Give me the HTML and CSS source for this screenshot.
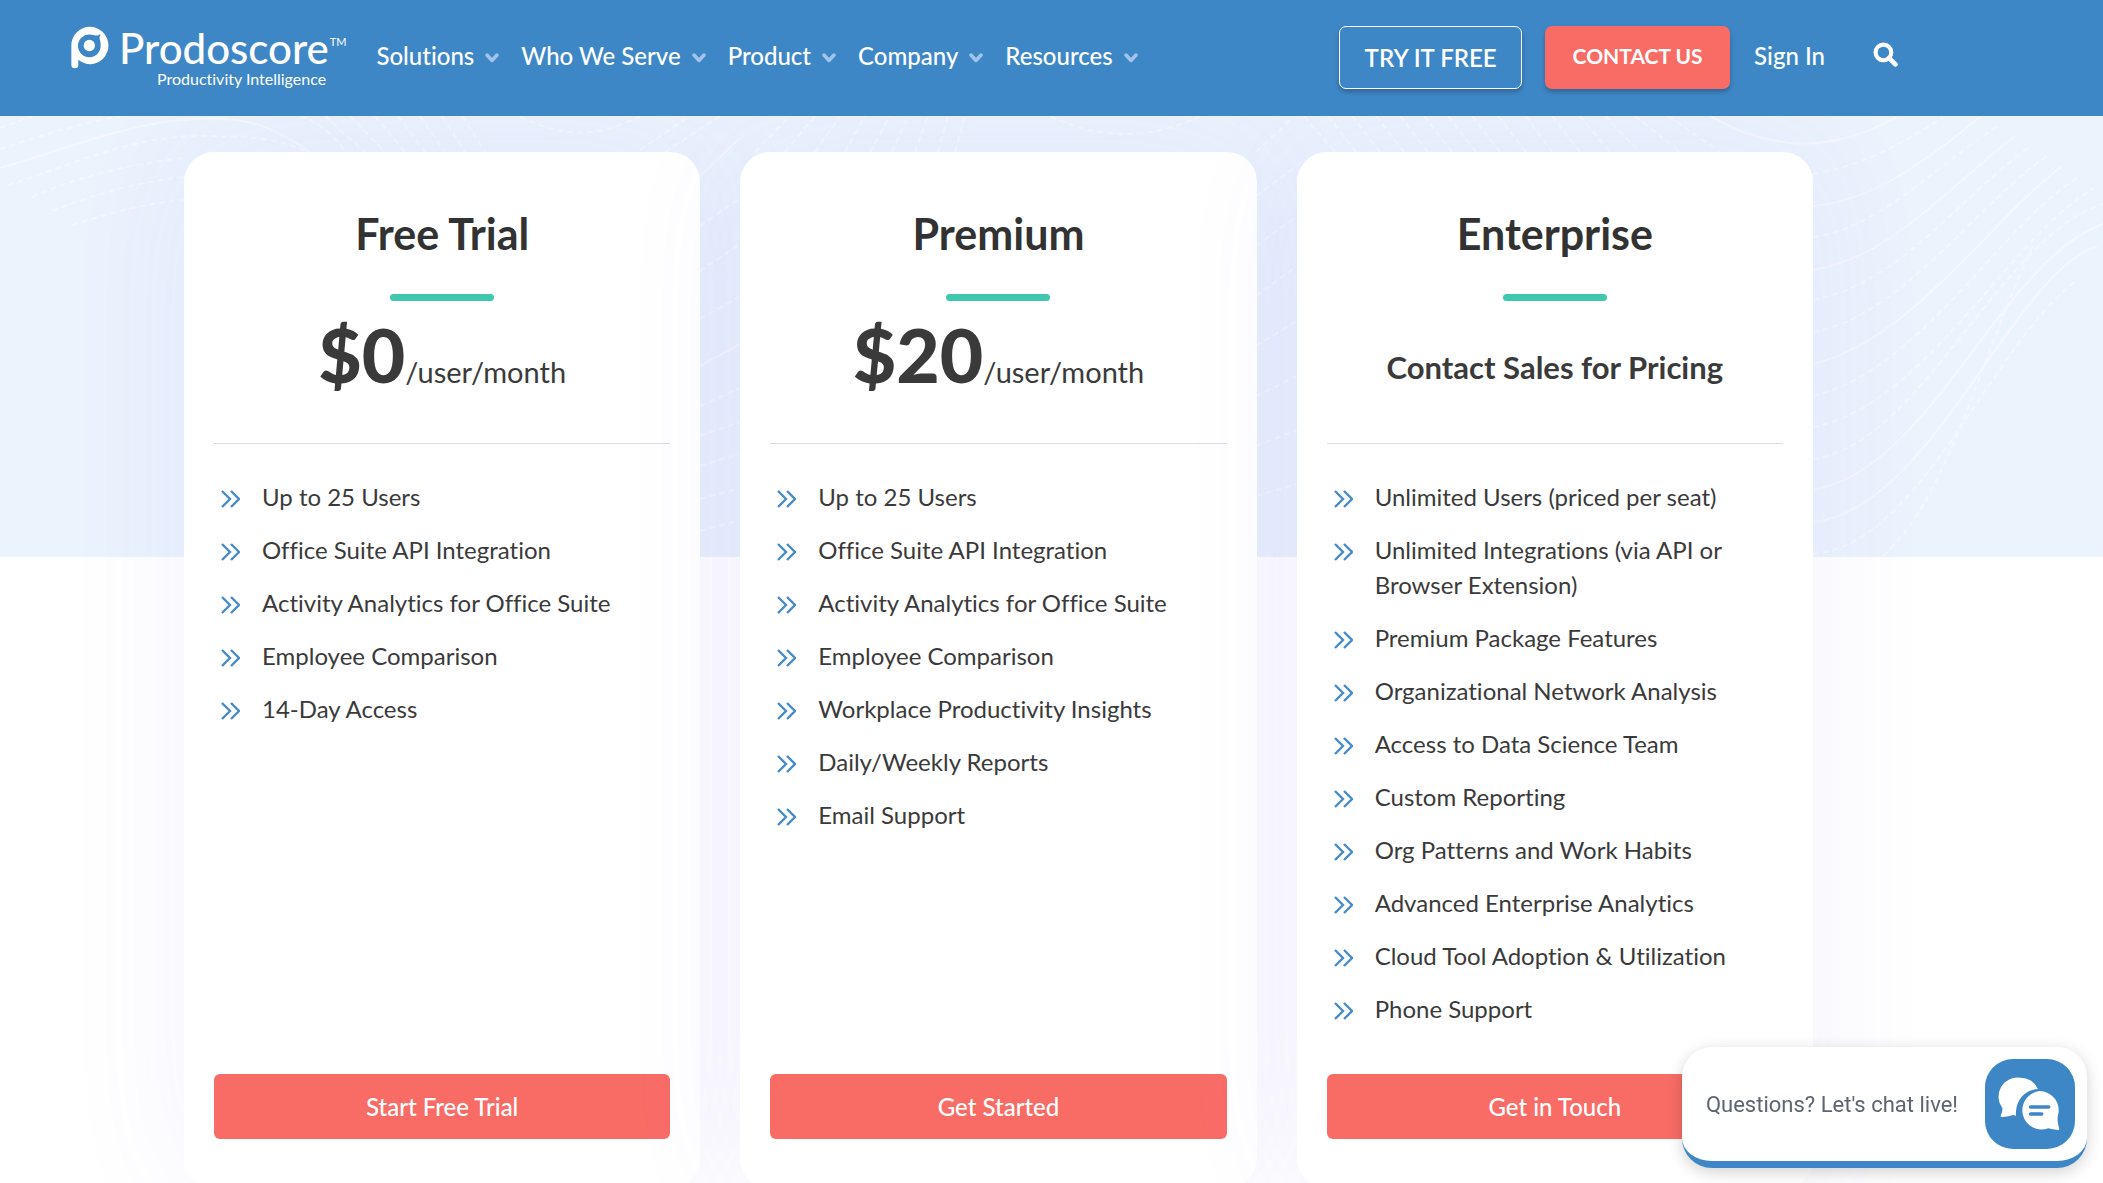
FILE: index.html
```html
<!DOCTYPE html>
<html lang="en">
<head>
<meta charset="utf-8">
<meta name="viewport" content="width=device-width, initial-scale=1">
<title>Pricing - Prodoscore</title>
<link rel="stylesheet" href="styles.css">
</head>
<body>
<svg class="defs" width="0" height="0" aria-hidden="true">
  <symbol id="down" viewBox="0 0 14 10"><path d="M2 2l5 5.500 5-5.500" fill="none" stroke="currentColor" stroke-width="3.500" stroke-linecap="round" stroke-linejoin="round"/></symbol>
</svg>

<header class="header">
  <a class="logo" href="#" aria-label="Prodoscore home">
    <svg class="logo-mark" viewBox="0 0 114 128" aria-hidden="true">
      <path fill="#fff" d="M57 2a55 56 0 1 1-35 99v15a10.500 10.500 0 0 1-21 0V58A56 56 0 0 1 57 2z"/>
      <path fill="#3e87c7" d="M55 25c10 0 14 3 19 3 6 0 10-2 15-4-3 6-4 10-3 15 2 5 3 10 3 19a34 34 0 1 1-34-33z"/>
      <circle cx="55" cy="58" r="17" fill="#fff"/>
    </svg>
    <span class="logo-words">
      <span class="logo-name">Prodoscore<sup class="logo-tm">TM</sup></span>
      <span class="logo-tag">Productivity Intelligence</span>
    </span>
  </a>
  <nav class="nav" aria-label="Main">
    <a href="#">Solutions<svg class="down"><use href="#down"/></svg></a>
    <a href="#">Who We Serve<svg class="down"><use href="#down"/></svg></a>
    <a href="#">Product<svg class="down"><use href="#down"/></svg></a>
    <a href="#">Company<svg class="down"><use href="#down"/></svg></a>
    <a href="#">Resources<svg class="down"><use href="#down"/></svg></a>
  </nav>
  <div class="actions">
    <a class="btn btn-outline" href="#">TRY IT FREE</a>
    <a class="btn btn-contact" href="#">CONTACT US</a>
    <a class="sign-in" href="#">Sign In</a>
    <button class="search" type="button" aria-label="Search">
      <svg viewBox="0 0 24 24" aria-hidden="true"><circle cx="10" cy="10" r="7.500" fill="none" stroke="#fff" stroke-width="4"/><path d="M15.500 15.500l6 6" stroke="#fff" stroke-width="4.500" stroke-linecap="round"/></svg>
    </button>
  </div>
</header>

<main class="pricing">
  <div class="backdrop" aria-hidden="true">
    <svg class="waves" viewBox="0 0 2103 441" preserveAspectRatio="xMidYMin slice">
      <g class="wave-solid">
        <path d="M1710 0C1770 35 1830 38 1897 1"/>
        <path d="M1813 90C1870 85 1920 50 1980 1"/>
        <path d="M1813 154C1890 142 1950 70 2015 20"/>
        <path d="M1813 248C1910 225 1990 105 2061 51"/>
        <path d="M1813 374C1930 355 2000 145 2103 108"/>
        <path d="M1813 406C1930 395 2010 160 2097 130"/>
        <path d="M0 52C60 35 120 10 180 4S270 8 310 36"/>
        <path d="M700 60L740 22M700 250L740 228"/>
      </g>
      <g class="wave-dash">
        <path d="M1813 58C1860 50 1900 30 1943 1"/>
        <path d="M1813 121C1880 112 1935 50 1998 10"/>
        <path d="M1813 184C1900 168 1960 80 2031 30"/>
        <path d="M1813 216C1900 202 1980 85 2047 40"/>
        <path d="M1813 280C1920 255 2000 110 2077 62"/>
        <path d="M1813 311C1925 290 2010 120 2094 72"/>
        <path d="M1813 343C1920 330 2000 120 2103 88"/>
        <path d="M1813 438C1920 430 1990 230 2075 166"/>
        <path d="M1883 440C1950 380 1980 240 2034 128"/>
        <path d="M0 12L32 0M0 33C40 20 80 8 120 0M8 69C70 50 130 20 200 20S280 26 310 36"/>
        <path d="M32 81C80 60 130 48 184 42M52 95C100 76 140 66 184 61M72 109C110 97 150 86 184 84"/>
        <path d="M520 0C560 22 600 22 640 0M300 0C320 6 335 20 345 36M325 0L365 36M350 0L385 36M375 0L405 36M398 0L425 36M420 0L445 36M442 0L465 36M462 0L485 36"/>
        <path d="M640 34L690 0M665 36L720 0M700 110L740 82M700 155L740 128M700 203L740 180M700 290L740 272M700 320L740 306M700 350L740 338M700 383L740 372M700 415L740 404"/>
        <path d="M755 36L790 0M785 36L815 0M815 36L840 0M845 36L865 0M870 36L890 0M892 36L908 0M915 36L928 0M938 36L948 0M955 36L965 0"/>
        <path d="M1050 0C1100 24 1150 24 1200 0M1256 36L1290 4M1256 80L1297 50M1256 130L1297 100M1256 180L1297 150M1256 230L1297 205M1256 280L1297 260M1256 330L1297 314M1256 380L1297 368"/>
        <path d="M1304 0L1335 36M1328 0L1356 36M1352 0L1380 36M1376 0L1404 36M1400 0L1428 36M1424 0L1452 36M1448 0L1476 36M1472 0L1500 36M1498 0L1526 36M1526 0L1552 36M1552 0L1580 36M1580 0L1610 36M1605 0L1640 36M1635 0L1680 36M1668 0L1720 36"/>
      </g>
    </svg>
  </div>

  <div class="plans">
    <section class="plan">
      <h2>Free Trial</h2>
      <p class="price"><strong>$0</strong>/user/month</p>
      <ul class="features">
        <li>Up to 25 Users</li>
        <li>Office Suite API Integration</li>
        <li>Activity Analytics for Office Suite</li>
        <li>Employee Comparison</li>
        <li>14-Day Access</li>
      </ul>
      <a class="cta" href="#">Start Free Trial</a>
    </section>
    <section class="plan">
      <h2>Premium</h2>
      <p class="price"><strong>$20</strong>/user/month</p>
      <ul class="features">
        <li>Up to 25 Users</li>
        <li>Office Suite API Integration</li>
        <li>Activity Analytics for Office Suite</li>
        <li>Employee Comparison</li>
        <li>Workplace Productivity Insights</li>
        <li>Daily/Weekly Reports</li>
        <li>Email Support</li>
      </ul>
      <a class="cta" href="#">Get Started</a>
    </section>
    <section class="plan">
      <h2>Enterprise</h2>
      <p class="price price-quote">Contact Sales for Pricing</p>
      <ul class="features">
        <li>Unlimited Users (priced per seat)</li>
        <li>Unlimited Integrations (via API or Browser Extension)</li>
        <li>Premium Package Features</li>
        <li>Organizational Network Analysis</li>
        <li>Access to Data Science Team</li>
        <li>Custom Reporting</li>
        <li>Org Patterns and Work Habits</li>
        <li>Advanced Enterprise Analytics</li>
        <li>Cloud Tool Adoption &amp; Utilization</li>
        <li>Phone Support</li>
      </ul>
      <a class="cta" href="#">Get in Touch</a>
    </section>
  </div>
</main>

<button class="chat" type="button">
  <span>Questions? Let's chat live!</span>
  <svg class="chat-icon" viewBox="0 0 270 270" aria-hidden="true">
    <path fill="#fff" d="M105 56a57 57 0 0 1 54 34c-40 2-68 34-66 80l-8-2c-12 4-24 6-34 6-4 0-5-3-3-7 3-6 5-13 4-20A57 57 0 0 1 105 56z"/>
    <path fill="#fff" d="M163 96a58 58 0 0 1 55 77c-1 12 1 22 4 33 2 5 0 8-5 7-10-1-18-3-27-5A58 58 0 1 1 163 96z"/>
    <path d="M137 144h54M137 165h33" stroke="#3e87c7" stroke-width="11" stroke-linecap="round"/>
  </svg>
</button>
</body>
</html>
```
FILE: styles.css
```css
* { box-sizing: border-box; }

html { overflow: hidden auto; scrollbar-width: none; }

body {
  margin: 0;
  background: #fff;
  color: #3a3a3a;
  font-family: Lato, "Open Sans", sans-serif;
  font-variant-ligatures: none;
  font-size: 24px;
}

a { color: inherit; text-decoration: none; }

.defs { position: absolute; }

/* Header */
.header {
  position: relative;
  z-index: 1;
  display: flex;
  align-items: flex-start;
  height: 116px;
  padding: 26px 205px 0 71px;
  background: #3e87c7;
  color: #fff;
}

.logo { display: flex; gap: 10px; }
.logo-mark { width: 38px; height: 43px; }
.logo-words { display: flex; flex-direction: column; }
.logo-name { display: flex; font-size: 42px; font-weight: 500; line-height: 44px; }
.logo-tm { font-size: 11px; line-height: 32px; font-weight: 400; margin-left: 1px; }
.logo-tag { padding-left: 38px; font-size: 16px; line-height: 18px; }

.nav {
  display: flex;
  gap: 22px;
  margin-left: 30px;
  line-height: 60px;
  font-weight: 500;
}
.nav a { display: flex; align-items: center; gap: 11px; white-space: nowrap; }
.down { width: 14px; height: 10px; margin-top: 4px; color: #a3c4ea; }

.actions { display: flex; margin-left: auto; white-space: nowrap; }
.btn {
  height: 63px;
  border-radius: 7px;
  text-align: center;
  box-shadow: 0 3px 5px rgba(0, 0, 0, .25);
}
.btn-outline { width: 183px; border: 1px solid #fff; font-weight: 600; line-height: 62px; }
.btn-contact {
  width: 185px;
  margin-left: 23px;
  background: #f96c66;
  font-size: 21px;
  font-weight: 700;
  line-height: 60px;
}
.sign-in { margin-left: 24px; line-height: 60px; font-weight: 500; }
.search { align-self: flex-start; margin: 16px 0 0 48px; padding: 0; border: 0; background: none; }
.search svg { display: block; width: 25px; height: 25px; }

/* Pricing */
.pricing { position: relative; padding: 36px 290px 0 184px; }
.backdrop {
  position: absolute;
  inset: 0 0 auto;
  height: 441px;
  background: #ebf3fd;
  overflow: hidden;
}
.waves { width: 100%; height: 100%; fill: none; stroke: #f5f7fe; stroke-width: 2; }
.wave-dash { stroke-dasharray: 6 4; }

.plans {
  position: relative;
  display: grid;
  grid-template-columns: repeat(3, 1fr);
  gap: 40px;
}
.plan {
  display: flex;
  flex-direction: column;
  padding: 58px 30px 49px;
  border-radius: 30px;
  background: #fff;
  box-shadow: 0 0 130px rgba(105, 75, 230, .07);
}
.plan h2 {
  margin: 0;
  color: #323232;
  font-size: 43px;
  font-weight: 700;
  line-height: 48px;
  text-align: center;
}
.plan h2::after {
  content: "";
  display: block;
  width: 104px;
  height: 7px;
  margin: 36px auto 0;
  border-radius: 4px;
  background: #3fc8ad;
}
.price {
  display: flex;
  align-items: baseline;
  justify-content: center;
  height: 143px;
  margin: 0;
  border-bottom: 1px solid #dcdce4;
  font-size: 29px;
  line-height: 106px;
}
.price strong { font-size: 75px; font-weight: 900; }
.price-quote { font-size: 31px; font-weight: 700; line-height: 132px; }

.features {
  display: grid;
  gap: 18px;
  margin: 35px 0 48px;
  padding: 0 16px 0 7px;
  list-style: none;
  line-height: 35px;
}
.features li { display: flex; gap: 22px; }
.features li::before {
  content: "";
  flex: none;
  width: 19px;
  height: 18px;
  margin-top: 11px;
  background: url("data:image/svg+xml,%3Csvg xmlns='http://www.w3.org/2000/svg' viewBox='0 0 19 18'%3E%3Cpath d='M1 1l8 8-8 8M10 1l8 8-8 8' fill='none' stroke='%23468bc8' stroke-width='2.4'/%3E%3C/svg%3E") no-repeat;
}

.cta {
  margin-top: auto;
  border-radius: 6px;
  background: #f96c66;
  color: #fff;
  font-weight: 500;
  line-height: 65px;
  text-align: center;
}

/* Chat launcher */
.chat {
  position: fixed;
  right: 16px;
  bottom: 15px;
  display: flex;
  align-items: center;
  gap: 27px;
  padding: 12px 12px 12px 24px;
  border: 0;
  border-bottom: 7px solid #3e87c7;
  border-radius: 30px;
  background: #fff;
  box-shadow: 0 4px 16px rgba(0, 0, 0, .18);
  color: #5d6473;
  font: 22px Roboto, sans-serif;
}
.chat-icon { width: 90px; height: 90px; border-radius: 28px; background: #3e87c7; }
```
